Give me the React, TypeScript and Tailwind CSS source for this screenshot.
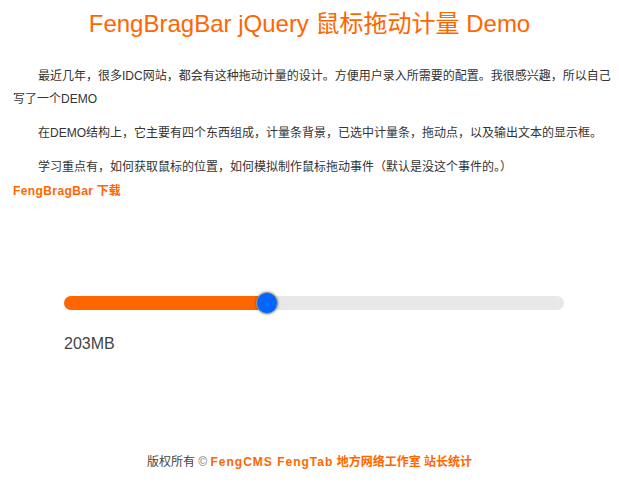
import React, { useState } from 'react';

const FONT = { fontFamily: '"Liberation Sans", "Noto Sans CJK SC", sans-serif' };

const MAX = 500;

const App = () => {
  const [value] = useState(203);
  const pct = (value / MAX) * 100;

  return (
    <div className="w-[619px] h-[503px] bg-white text-[#333] text-[12px]" style={FONT}>
      <h1 className="pt-[9px] text-center text-[24px] leading-[30px] text-[#ff6600] font-normal">
        FengBragBar jQuery 鼠标拖动计量 Demo
      </h1>

      <div className="pl-[13px] pr-[5px] mt-[26px]">
        <p className="indent-[25px] leading-[23px]">
          最近几年，很多IDC网站，都会有这种拖动计量的设计。方便用户录入所需要的配置。我很感兴趣，所以自己写了一个DEMO
        </p>
        <p className="indent-[25px] leading-[23px] mt-[11px]">
          在DEMO结构上，它主要有四个东西组成，计量条背景，已选中计量条，拖动点，以及输出文本的显示框。
        </p>
        <p className="indent-[25px] leading-[23px] mt-[11px]">
          学习重点有，如何获取鼠标的位置，如何模拟制作鼠标拖动事件（默认是没这个事件的。）
        </p>
        <a className="block font-bold text-[#ff6600] leading-[16px] mt-[4px]">
          <span className="tracking-[0.4px]">FengBragBar</span> 下载
        </a>
      </div>

      {/* slider */}
      <div className="ml-[64px] mt-[97px] w-[500px]">
        <div className="relative h-[14px] rounded-full bg-[#e8e8e8]">
          <div className="h-full rounded-full bg-[#ff6600]" style={{ width: `${pct}%` }} />
          <div
            className="absolute top-1/2 w-[22px] h-[22px] -translate-x-1/2 -translate-y-1/2 rounded-full bg-[#0066ff] border border-[#999] shadow-[0_0_3px_rgba(0,0,0,0.4)]"
            style={{ left: `${pct}%` }}
          />
        </div>
        <div className="mt-[24px] text-[16px] leading-[20px] text-[#444]">{value}MB</div>
      </div>

      <div className="mt-[100px] text-center leading-[16px] text-[#444]">
        版权所有 <span className="text-[#777]">©</span>{' '}
        <span className="font-bold text-[#ff6600]">
          <span className="tracking-[1px]">FengCMS FengTab</span> 地方网络工作室 站长统计
        </span>
      </div>
    </div>
  );
};

export default App;
